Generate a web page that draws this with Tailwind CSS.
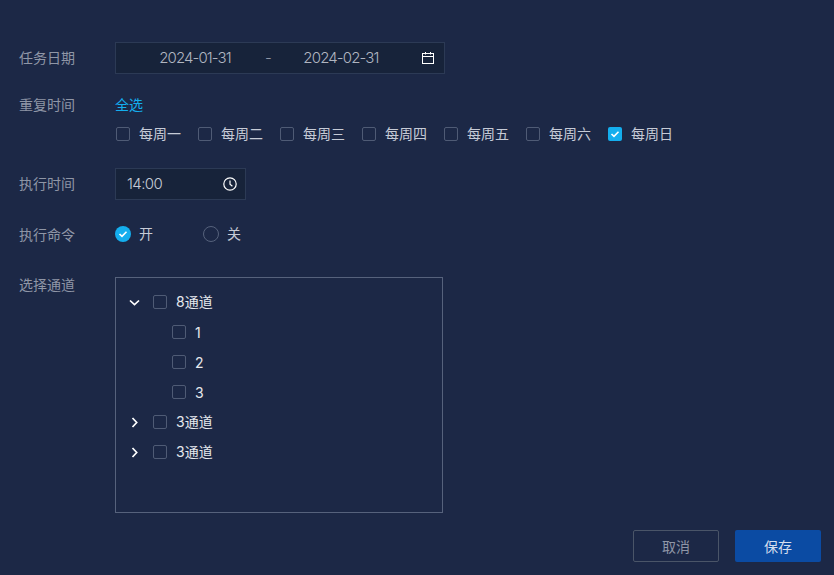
<!doctype html>
<html lang="zh-CN">
<head>
  <meta charset="utf-8">
  <meta name="viewport" content="width=device-width, initial-scale=1">
  <title>任务</title>
  <script src="https://cdn.jsdelivr.net/npm/@tailwindcss/browser@4"></script>
</head>
<body class="bg-[#1c2846] font-['Inter','Noto_Sans_CJK_SC',sans-serif] text-[14px] text-[#c6cbd6] overflow-hidden">
  <main class="w-[834px] h-[575px] pt-[42px] pl-[19px] pr-[13px]">

    <div class="flex">
      <label class="w-[96px] h-[32px] leading-[32px] text-[#8f96a6]">任务日期</label>
      <div class="w-[330px] h-[32px] flex items-center bg-[#17233a] border border-[#2c3a55] text-[#b0b5c0] text-[15px] font-light whitespace-nowrap">
        <span class="ml-[42px] w-[74px] text-center tracking-[-0.9px]">2024-01-31</span>
        <span class="ml-[33px] w-[4px] text-center text-[#8f96a6]">-</span>
        <span class="ml-[34px] w-[76px] text-center tracking-[-0.85px]">2024-02-31</span>
        <svg class="ml-[42px] text-white" width="14" height="14" viewBox="0 0 14 14" fill="none" stroke="currentColor" stroke-width="1">
          <rect x="1.5" y="2.5" width="11" height="10"/>
          <path d="M1.5 5.5h11M4.5 1v2.5M9.5 1v2.5"/>
        </svg>
      </div>
    </div>

    <div class="flex mt-[20px]">
      <label class="w-[96px] h-[22px] leading-[22px] text-[#8f96a6]">重复时间</label>
      <div>
        <a class="block h-[22px] leading-[22px] text-[#14aeee]">全选</a>
        <div class="flex mt-[7px] h-[22px] items-center">
          <label class="w-[82px] flex items-center"><span class="w-[14px] h-[14px] ml-[1px] mr-[9px] rounded-[2px] border border-[#4f5b75]"></span><span class="-mt-[2px]">每周一</span></label>
          <label class="w-[82px] flex items-center"><span class="w-[14px] h-[14px] ml-[1px] mr-[9px] rounded-[2px] border border-[#4f5b75]"></span><span class="-mt-[2px]">每周二</span></label>
          <label class="w-[82px] flex items-center"><span class="w-[14px] h-[14px] ml-[1px] mr-[9px] rounded-[2px] border border-[#4f5b75]"></span><span class="-mt-[2px]">每周三</span></label>
          <label class="w-[82px] flex items-center"><span class="w-[14px] h-[14px] ml-[1px] mr-[9px] rounded-[2px] border border-[#4f5b75]"></span><span class="-mt-[2px]">每周四</span></label>
          <label class="w-[82px] flex items-center"><span class="w-[14px] h-[14px] ml-[1px] mr-[9px] rounded-[2px] border border-[#4f5b75]"></span><span class="-mt-[2px]">每周五</span></label>
          <label class="w-[82px] flex items-center"><span class="w-[14px] h-[14px] ml-[1px] mr-[9px] rounded-[2px] border border-[#4f5b75]"></span><span class="-mt-[2px]">每周六</span></label>
          <label class="w-[82px] flex items-center">
            <span class="w-[14px] h-[14px] ml-[1px] mr-[9px] rounded-[2px] bg-[#14aeee] flex items-center justify-center">
              <svg width="10" height="10" viewBox="0 0 10 10" fill="none" stroke="white" stroke-width="1.6"><path d="M1.5 5l2.5 2.4L8.5 2.8"/></svg>
            </span><span class="-mt-[2px]">每周日</span>
          </label>
        </div>
      </div>
    </div>

    <div class="flex mt-[23px]">
      <label class="w-[96px] h-[32px] leading-[32px] text-[#8f96a6]">执行时间</label>
      <div class="w-[131px] h-[32px] flex items-center justify-between pl-[11px] pr-[8px] bg-[#17233a] border border-[#2c3a55] text-[#c6cbd6] text-[15px] font-light">
        <span class="tracking-[-0.6px]">14:00</span>
        <svg class="text-white" width="14" height="14" viewBox="0 0 14 14" fill="none" stroke="currentColor" stroke-width="1.2">
          <circle cx="7" cy="7" r="6.2"/>
          <path d="M7 3.5V7.3l2.4 2"/>
        </svg>
      </div>
    </div>

    <div class="flex mt-[18px] h-[32px] items-center">
      <label class="w-[96px] text-[#8f96a6]">执行命令</label>
      <label class="w-[88px] flex items-center">
        <span class="w-[16px] h-[16px] mr-[8px] rounded-full bg-[#14aeee] flex items-center justify-center">
          <svg width="10" height="10" viewBox="0 0 10 10" fill="none" stroke="white" stroke-width="1.6"><path d="M1.5 5l2.5 2.4L8.5 2.8"/></svg>
        </span><span class="-mt-[2px]">开</span>
      </label>
      <label class="flex items-center">
        <span class="w-[16px] h-[16px] mr-[8px] rounded-full border border-[#56627c]"></span><span class="-mt-[2px]">关</span>
      </label>
    </div>

    <div class="flex mt-[27px]">
      <label class="w-[96px] h-[16px] leading-[16px] text-[#8f96a6]">选择通道</label>
      <div class="w-[328px] h-[236px] border border-[#56627c] pt-[9px] text-[#e6e9ee]">
        <div class="h-[30px] flex items-center pl-[13px]">
          <svg class="mr-[13px]" width="11" height="11" viewBox="0 0 11 11" fill="none" stroke="white" stroke-width="1.7"><path d="M1 3.5l4.5 4.2L10 3.5"/></svg>
          <span class="w-[14px] h-[14px] mr-[9px] rounded-[2px] border border-[#4f5b75]"></span><span class="-mt-[2px]">8通道</span>
        </div>
        <div class="h-[30px] flex items-center pl-[56px]"><span class="w-[14px] h-[14px] mr-[9px] rounded-[2px] border border-[#4f5b75]"></span>1</div>
        <div class="h-[30px] flex items-center pl-[56px]"><span class="w-[14px] h-[14px] mr-[9px] rounded-[2px] border border-[#4f5b75]"></span>2</div>
        <div class="h-[30px] flex items-center pl-[56px]"><span class="w-[14px] h-[14px] mr-[9px] rounded-[2px] border border-[#4f5b75]"></span>3</div>
        <div class="h-[30px] flex items-center pl-[13px]">
          <svg class="mr-[13px]" width="11" height="11" viewBox="0 0 11 11" fill="none" stroke="white" stroke-width="1.7"><path d="M3.5 1l4.2 4.5L3.5 10"/></svg>
          <span class="w-[14px] h-[14px] mr-[9px] rounded-[2px] border border-[#4f5b75]"></span><span class="-mt-[2px]">3通道</span>
        </div>
        <div class="h-[30px] flex items-center pl-[13px]">
          <svg class="mr-[13px]" width="11" height="11" viewBox="0 0 11 11" fill="none" stroke="white" stroke-width="1.7"><path d="M3.5 1l4.2 4.5L3.5 10"/></svg>
          <span class="w-[14px] h-[14px] mr-[9px] rounded-[2px] border border-[#4f5b75]"></span><span class="-mt-[2px]">3通道</span>
        </div>
      </div>
    </div>

    <div class="flex justify-end gap-[16px] mt-[17px]">
      <button class="w-[86px] h-[32px] rounded-[2px] border border-[#4a5568] text-[#8f96a6]">取消</button>
      <button class="w-[86px] h-[32px] rounded-[2px] bg-[#0b4ba3] text-[#d5deee]">保存</button>
    </div>

  </main>
</body>
</html>
